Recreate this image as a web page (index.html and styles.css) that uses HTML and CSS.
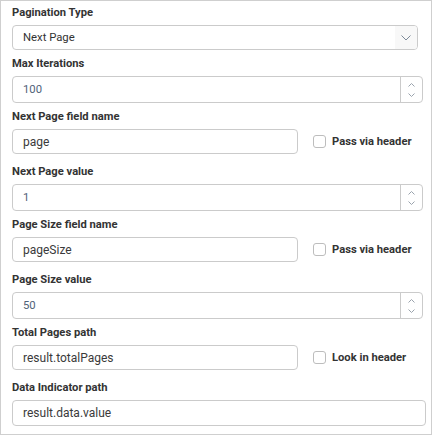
FILE: index.html
```html
<!DOCTYPE html>
<html>
<head>
<meta charset="utf-8">
<link rel="stylesheet" href="styles.css">
</head>
<body>
<div class="panel">
  <div class="group">
    <div class="label">Pagination Type</div>
    <div class="box select">
      <span class="val small">Next Page</span>
      <span class="sel-btn"><svg width="10" height="6" viewBox="0 0 10 6"><polyline points="0.5,0.5 5,5 9.5,0.5" fill="none" stroke="#7d8a99" stroke-width="1"/></svg></span>
    </div>
  </div>
  <div class="group">
    <div class="label">Max Iterations</div>
    <div class="box number">
      <span class="val num">100</span>
      <span class="spin">
        <svg width="7" height="4" viewBox="0 0 7 4"><polyline points="0.5,3.5 3.5,0.5 6.5,3.5" fill="none" stroke="#9aa3ad" stroke-width="1"/></svg>
        <svg width="7" height="4" viewBox="0 0 7 4"><polyline points="0.5,0.5 3.5,3.5 6.5,0.5" fill="none" stroke="#9aa3ad" stroke-width="1"/></svg>
      </span>
    </div>
  </div>
  <div class="group">
    <div class="label">Next Page field name</div>
    <div class="row">
      <div class="box short"><span class="val">page</span></div>
      <span class="check"></span>
      <span class="check-label">Pass via header</span>
    </div>
  </div>
  <div class="group">
    <div class="label">Next Page value</div>
    <div class="box number">
      <span class="val num">1</span>
      <span class="spin">
        <svg width="7" height="4" viewBox="0 0 7 4"><polyline points="0.5,3.5 3.5,0.5 6.5,3.5" fill="none" stroke="#9aa3ad" stroke-width="1"/></svg>
        <svg width="7" height="4" viewBox="0 0 7 4"><polyline points="0.5,0.5 3.5,3.5 6.5,0.5" fill="none" stroke="#9aa3ad" stroke-width="1"/></svg>
      </span>
    </div>
  </div>
  <div class="group">
    <div class="label">Page Size field name</div>
    <div class="row">
      <div class="box short"><span class="val">pageSize</span></div>
      <span class="check"></span>
      <span class="check-label">Pass via header</span>
    </div>
  </div>
  <div class="group">
    <div class="label">Page Size value</div>
    <div class="box number">
      <span class="val num">50</span>
      <span class="spin">
        <svg width="7" height="4" viewBox="0 0 7 4"><polyline points="0.5,3.5 3.5,0.5 6.5,3.5" fill="none" stroke="#9aa3ad" stroke-width="1"/></svg>
        <svg width="7" height="4" viewBox="0 0 7 4"><polyline points="0.5,0.5 3.5,3.5 6.5,0.5" fill="none" stroke="#9aa3ad" stroke-width="1"/></svg>
      </span>
    </div>
  </div>
  <div class="group">
    <div class="label">Total Pages path</div>
    <div class="row">
      <div class="box short"><span class="val">result.totalPages</span></div>
      <span class="check"></span>
      <span class="check-label">Look in header</span>
    </div>
  </div>
  <div class="group">
    <div class="label">Data Indicator path</div>
    <div class="box full"><span class="val">result.data.value</span></div>
  </div>
</div>
</body>
</html>
```
FILE: styles.css
```css
html, body {
  margin: 0;
  padding: 0;
  background: #fff;
}

body {
  font-family: Roboto, "Liberation Sans", sans-serif;
  color: #333;
}

.panel {
  box-sizing: border-box;
  width: 432px;
  height: 435px;
  border: 1px solid #cfcfcf;
  padding: 4px 0 0 11px;
  display: flex;
  flex-direction: column;
  gap: 6px;
}

.label {
  font-size: 11.2px;
  font-weight: bold;
  line-height: 16px;
  height: 16px;
  margin-bottom: 4px;
  color: #333;
}

.box {
  box-sizing: border-box;
  border: 1px solid #cbcbcb;
  border-radius: 4px;
  display: flex;
  align-items: center;
  overflow: hidden;
  background: #fff;
}

.val {
  flex: 1;
  padding-left: 10px;
  font-size: 12px;
  color: #3a3a3a;
  white-space: nowrap;
}

.val.small {
  font-size: 11.3px;
  color: #333;
}

.val.num {
  font-size: 11.3px;
  color: #4f6278;
}

.select {
  width: 406px;
  height: 25px;
}

.sel-btn {
  width: 22px;
  height: 100%;
  background: #f8f8f8;
  display: flex;
  align-items: center;
  justify-content: center;
}

.number {
  width: 411px;
  height: 27px;
}

.spin {
  width: 21px;
  height: 100%;
  border-left: 1px solid #cbcbcb;
  display: flex;
  flex-direction: column;
  align-items: center;
  justify-content: center;
  gap: 6px;
}

.spin svg {
  display: block;
}

.row {
  display: flex;
  align-items: center;
  padding-bottom: 4px;
}

.short {
  width: 286px;
  height: 25px;
}

.check {
  box-sizing: border-box;
  width: 13px;
  height: 13px;
  border: 1px solid #bdbdbd;
  border-radius: 3px;
  margin-left: 15px;
  background: #fff;
}

.check-label {
  margin-left: 6px;
  font-size: 11.2px;
  font-weight: bold;
  color: #333;
}

.full {
  width: 414px;
  height: 26px;
}
```
